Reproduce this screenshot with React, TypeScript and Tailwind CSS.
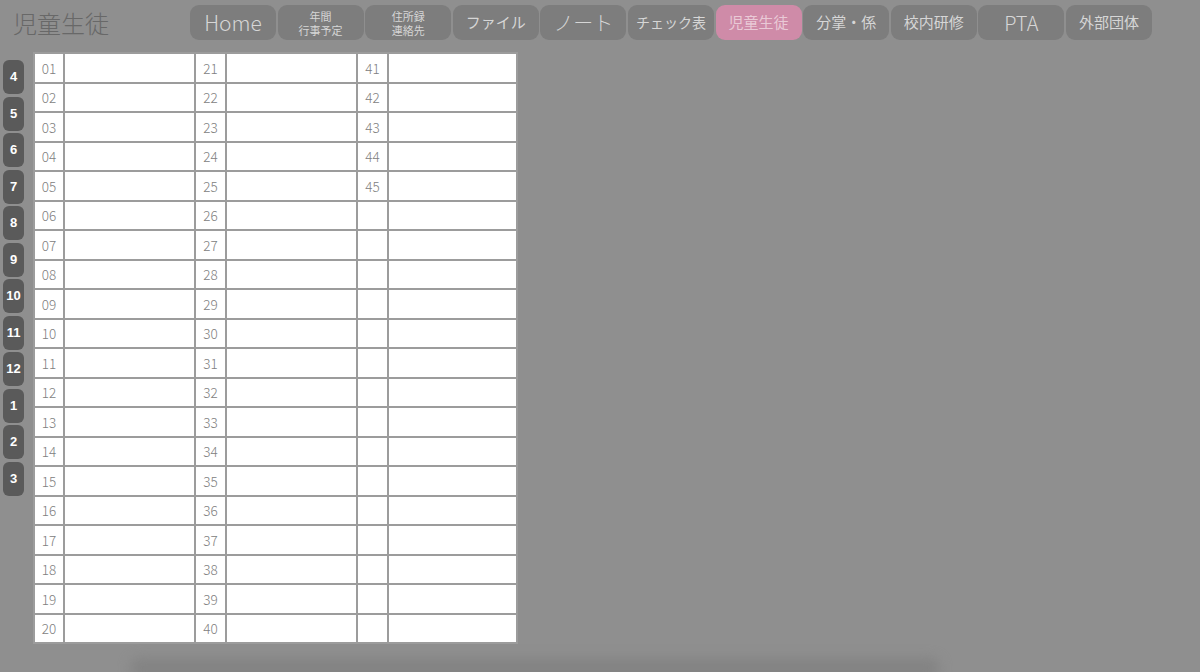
import React from "react";

const NAV: { label: string[]; size: string; active?: boolean }[] = [
  { label: ["Home"], size: "text-[21px] font-light" },
  { label: ["年間", "行事予定"], size: "text-[11px] leading-[14px]" },
  { label: ["住所録", "連絡先"], size: "text-[11px] leading-[14px]" },
  { label: ["ファイル"], size: "text-[15px]" },
  { label: ["ノート"], size: "text-[20px] font-light" },
  { label: ["チェック表"], size: "text-[14px]" },
  { label: ["児童生徒"], size: "text-[15px]", active: true },
  { label: ["分掌・係"], size: "text-[15px]" },
  { label: ["校内研修"], size: "text-[15px]" },
  { label: ["PTA"], size: "text-[20px] font-light" },
  { label: ["外部団体"], size: "text-[15px]" },
];

const MONTHS = [4, 5, 6, 7, 8, 9, 10, 11, 12, 1, 2, 3];

const NAME_W = ["w-[131px]", "w-[131px]", "w-[129px]"];

const pad = (n: number) => (n < 10 ? `0${n}` : `${n}`);

function NavButton({ label, size, active }: { label: string[]; size: string; active?: boolean }) {
  return (
    <button
      className={`w-[86px] h-[35px] rounded-[9px] flex flex-col items-center justify-center ${size} ${
        active ? "bg-[#cf8ba8] text-[#e9c9d6]" : "bg-[#7d7d7d] text-[#d6d6d6]"
      }`}
    >
      {label.map((l) => (
        <span key={l}>{l}</span>
      ))}
    </button>
  );
}

export default function App() {
  return (
    <div
      className="relative w-[1200px] h-[672px] overflow-hidden bg-[#8f8f8f]"
      style={{ fontFamily: '"Noto Sans CJK JP", "Noto Sans", sans-serif' }}
    >
      {/* header */}
      <div className="flex items-start h-[52px]">
        <div className="w-[190px] pl-[13px] pt-[5px] text-[24px] font-light text-[#686868]">児童生徒</div>
        <nav className="flex gap-[1.6px] pt-[5px]">
          {NAV.map((n) => (
            <NavButton key={n.label.join("")} {...n} />
          ))}
        </nav>
      </div>

      <div className="flex">
        {/* month tabs */}
        <div className="flex flex-col gap-[2.5px] pl-[3px] pt-[8px] w-[33px]">
          {MONTHS.map((m) => (
            <button
              key={m}
              className="w-[21px] h-[34px] rounded-[6px] bg-[#5a5a5a] text-white text-[13px] font-bold flex items-center justify-center"
              style={{ fontFamily: '"Liberation Sans", Arial, sans-serif' }}
            >
              {m}
            </button>
          ))}
        </div>

        {/* class list */}
        <table className="border-collapse bg-white text-[#808080] text-[13.5px] font-light">
          <tbody>
            {Array.from({ length: 20 }, (_, r) => (
              <tr key={r} className="h-[29.5px]">
                {[0, 1, 2].map((c) => {
                  const n = c * 20 + r + 1;
                  const label = n <= 45 ? pad(n) : "";
                  return (
                    <React.Fragment key={c}>
                      <td className={`border-2 border-[#9c9c9c] p-0 text-center ${c === 0 ? "w-[30px]" : "w-[31px]"}`}>
                        {label}
                      </td>
                      <td className={`border-2 border-[#9c9c9c] p-0 ${NAME_W[c]}`} />
                    </React.Fragment>
                  );
                })}
              </tr>
            ))}
          </tbody>
        </table>
      </div>

      {/* scroll shade */}
      <div className="absolute left-[130px] bottom-[-6px] w-[810px] h-[20px] rounded-full bg-[#838383] blur-[6px]" />
    </div>
  );
}
